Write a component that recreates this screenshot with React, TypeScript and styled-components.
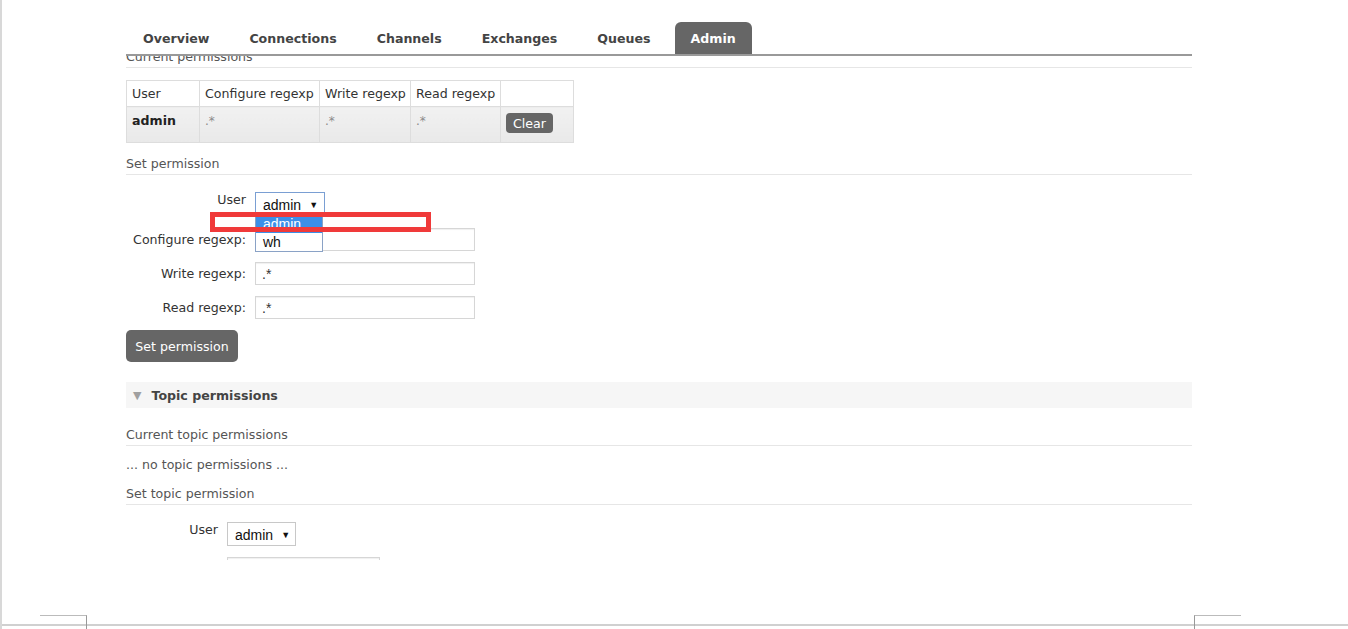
import React from 'react';
import styled, { createGlobalStyle } from 'styled-components';

const GlobalStyle = createGlobalStyle`
  html, body {
    margin: 0;
    padding: 0;
    background: #fff;
  }
  body {
    font-family: "DejaVu Sans", Verdana, sans-serif;
    font-size: 12.6px;
    color: #444;
  }
  * {
    box-sizing: border-box;
  }
`;

const Frame = styled.div`
  width: 1348px;
  height: 629px;
  border-left: 2px solid #d8d8d8;
  display: flex;
  flex-direction: column;
  overflow: hidden;
`;

const Screen = styled.div`
  margin-left: 124px;
  width: 1066px;
  height: 560px;
  padding-top: 22px;
  display: flex;
  flex-direction: column;
`;

const TabBar = styled.div`
  display: flex;
  border-bottom: 2px solid #999;
  padding-left: 1px;
`;

const Tab = styled.div<{ $active?: boolean }>`
  height: 32px;
  line-height: 33px;
  padding: 0 16px;
  margin-right: 8px;
  font-weight: bold;
  color: ${(p) => (p.$active ? '#fff' : '#444')};
  background: ${(p) => (p.$active ? '#666' : 'transparent')};
  border-radius: 6px 6px 0 0;
`;

const Viewport = styled.div`
  flex: 1;
  overflow: hidden;
`;

const Content = styled.div`
  margin-top: -8px;
  display: flex;
  flex-direction: column;
`;

const Heading = styled.div`
  line-height: 16px;
  padding: 1px 0 2px;
  color: #555;
  border-bottom: 1px solid #e6e6e6;
`;

const Note = styled.div`
  line-height: 16px;
  color: #555;
  margin: 11px 0 12px;
`;

const PermTable = styled.table`
  border-collapse: collapse;
  table-layout: fixed;
  width: 447px;
  margin: 12px 0;
  color: #333;

  th,
  td {
    border: 1px solid #ddd;
    padding: 0 5px;
    text-align: left;
    font-weight: normal;
    white-space: nowrap;
  }
  th {
    height: 26px;
    background: #fff;
  }
  td {
    height: 36px;
    vertical-align: top;
    padding-top: 6px;
    line-height: 16px;
    background: linear-gradient(#f1f1f1, #e9e9e9);
  }
`;

const UserCell = styled.td`
  font-weight: bold !important;
  color: #222;
`;

const Regex = styled.span`
  color: #8a8a8a;
  font-size: 12px;
`;

const SmallButton = styled.button`
  border: none;
  background: #666;
  color: #fff;
  font-family: inherit;
  font-size: 12.6px;
  height: 20px;
  padding: 0 7px;
  border-radius: 4px;
`;

const Form = styled.div<{ $top: number }>`
  display: flex;
  flex-direction: column;
  margin-top: ${(p) => p.$top}px;
`;

const Row = styled.div<{ $gap: number }>`
  position: relative;
  display: flex;
  align-items: flex-start;
  margin-bottom: ${(p) => p.$gap}px;
`;

const Label = styled.div<{ $w: number; $top: number }>`
  width: ${(p) => p.$w}px;
  margin-right: 9px;
  text-align: right;
  line-height: 16px;
  padding-top: ${(p) => p.$top}px;
  color: #333;
`;

const SelectBox = styled.div<{ $w: number; $h: number; $focus?: boolean }>`
  position: relative;
  width: ${(p) => p.$w}px;
  height: ${(p) => p.$h}px;
  border: 1px solid ${(p) => (p.$focus ? '#7a9fd3' : '#c8c8c8')};
  background: #fff;
  display: flex;
  align-items: center;
  padding: 2px 0 0 7px;
  font-family: "Liberation Sans", Arial, sans-serif;
  font-size: 14px;
  color: #111;
`;

const Arrow = styled.span`
  font-size: 9px;
  margin-left: 8px;
  color: #111;
`;

const DropList = styled.div`
  position: absolute;
  top: 100%;
  left: -1px;
  width: 68px;
  border: 1px solid #8aa2c6;
  background: #fff;
  z-index: 2;
`;

const Option = styled.div<{ $hl?: boolean }>`
  height: 18px;
  line-height: 18px;
  padding-left: 7px;
  background: ${(p) => (p.$hl ? '#3c8fe8' : '#fff')};
  color: ${(p) => (p.$hl ? '#fff' : '#111')};
`;

const Marker = styled.div`
  position: absolute;
  left: 84px;
  top: 20px;
  width: 221px;
  height: 20px;
  border: 5px solid #f03a3a;
  z-index: 3;
`;

const TextInput = styled.div<{ $w: number }>`
  width: ${(p) => p.$w}px;
  height: 23px;
  border: 1px solid #d6d6d6;
  box-shadow: inset 0 1px 1px #f0f0f0;
  padding: 3px 0 0 6px;
  font-family: "Liberation Sans", Arial, sans-serif;
  font-size: 14px;
  color: #333;
`;

const BigButton = styled.button`
  align-self: flex-start;
  border: none;
  background: #666;
  color: #fff;
  font-family: inherit;
  font-size: 12.6px;
  width: 112px;
  height: 32px;
  border-radius: 5px;
  padding: 0;
`;

const SectionHeader = styled.div`
  margin: 20px 0 18px;
  height: 26px;
  background: #f6f6f6;
  display: flex;
  align-items: center;
  padding-left: 7px;
  font-weight: bold;
  color: #444;
`;

const Tri = styled.span`
  color: #a0a0a0;
  font-size: 11px;
  margin-right: 10px;
`;

const Footer = styled.div`
  flex: 1;
  display: flex;
  align-items: flex-end;
  justify-content: space-between;
  padding: 0 107px 0 38px;
  background: linear-gradient(
    to bottom,
    transparent 64px,
    #d0d0d0 64px,
    #d0d0d0 66px,
    transparent 66px
  );
`;

const CornerMark = styled.div<{ $side: 'left' | 'right' }>`
  width: 47px;
  height: 14px;
  border-top: 1px solid #bbb;
  ${(p) => (p.$side === 'left' ? 'border-right' : 'border-left')}: 1px solid #999;
`;

const tabs = ['Overview', 'Connections', 'Channels', 'Exchanges', 'Queues', 'Admin'];

export default function App() {
  return (
    <>
      <GlobalStyle />
      <Frame>
        <Screen>
          <TabBar>
            {tabs.map((t) => (
              <Tab key={t} $active={t === 'Admin'}>
                {t}
              </Tab>
            ))}
          </TabBar>
          <Viewport>
            <Content>
              <Heading>Current permissions</Heading>
              <PermTable>
                <colgroup>
                  <col style={{ width: 73 }} />
                  <col style={{ width: 120 }} />
                  <col style={{ width: 91 }} />
                  <col style={{ width: 90 }} />
                  <col style={{ width: 73 }} />
                </colgroup>
                <thead>
                  <tr>
                    <th>User</th>
                    <th>Configure regexp</th>
                    <th>Write regexp</th>
                    <th>Read regexp</th>
                    <th></th>
                  </tr>
                </thead>
                <tbody>
                  <tr>
                    <UserCell>admin</UserCell>
                    <td>
                      <Regex>.*</Regex>
                    </td>
                    <td>
                      <Regex>.*</Regex>
                    </td>
                    <td>
                      <Regex>.*</Regex>
                    </td>
                    <td>
                      <SmallButton>Clear</SmallButton>
                    </td>
                  </tr>
                </tbody>
              </PermTable>
              <Heading>Set permission</Heading>
              <Form $top={17}>
                <Row $gap={13}>
                  <Label $w={120} $top={0}>
                    User
                  </Label>
                  <SelectBox $w={70} $h={23} $focus>
                    admin<Arrow>▼</Arrow>
                    <DropList>
                      <Option $hl>admin</Option>
                      <Option>wh</Option>
                    </DropList>
                  </SelectBox>
                  <Marker />
                </Row>
                <Row $gap={11}>
                  <Label $w={120} $top={4}>
                    Configure regexp:
                  </Label>
                  <TextInput $w={220}>.*</TextInput>
                </Row>
                <Row $gap={11}>
                  <Label $w={120} $top={4}>
                    Write regexp:
                  </Label>
                  <TextInput $w={220}>.*</TextInput>
                </Row>
                <Row $gap={11}>
                  <Label $w={120} $top={4}>
                    Read regexp:
                  </Label>
                  <TextInput $w={220}>.*</TextInput>
                </Row>
                <BigButton>Set permission</BigButton>
              </Form>
              <SectionHeader>
                <Tri>▼</Tri>Topic permissions
              </SectionHeader>
              <Heading>Current topic permissions</Heading>
              <Note>... no topic permissions ...</Note>
              <Heading>Set topic permission</Heading>
              <Form $top={17}>
                <Row $gap={11}>
                  <Label $w={92} $top={0}>
                    User
                  </Label>
                  <SelectBox $w={69} $h={24}>
                    admin<Arrow>▼</Arrow>
                  </SelectBox>
                </Row>
                <Row $gap={11}>
                  <Label $w={92} $top={4}></Label>
                  <TextInput $w={153}>.*</TextInput>
                </Row>
              </Form>
            </Content>
          </Viewport>
        </Screen>
        <Footer>
          <CornerMark $side="left" />
          <CornerMark $side="right" />
        </Footer>
      </Frame>
    </>
  );
}
